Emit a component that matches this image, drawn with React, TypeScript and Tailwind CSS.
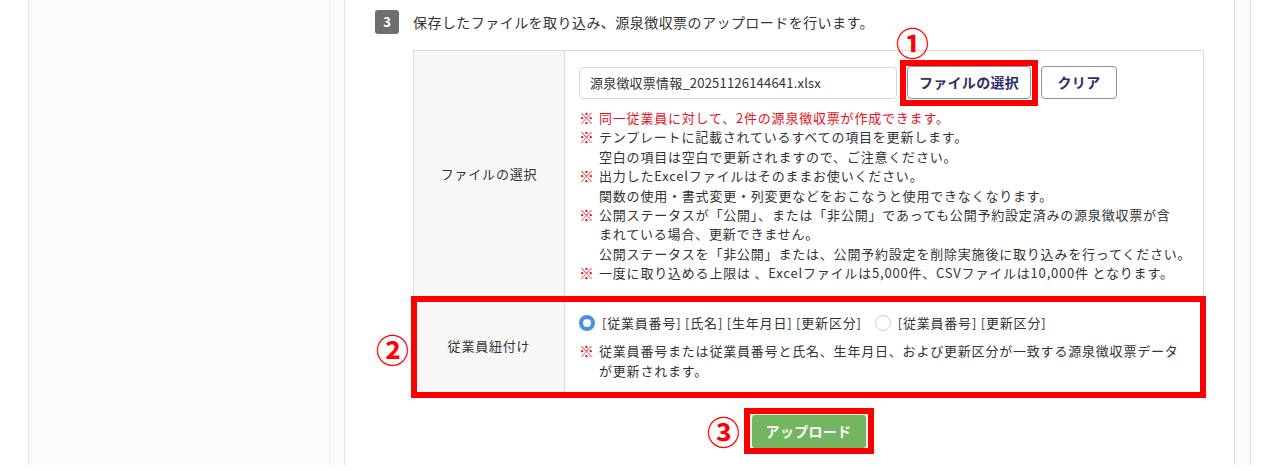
import React from 'react';

const Note = ({ red, children }: { red?: boolean; children: React.ReactNode }) => (
  <div className="flex">
    <span className="w-[20px] shrink-0 text-[#e8101a] text-[15px] font-bold">※</span>
    <div className={red ? 'text-[#e8101a]' : ''}>{children}</div>
  </div>
);

const Circled = ({ n, className }: { n: string; className: string }) => (
  <span
    className={`absolute w-[32px] h-[32px] flex items-center justify-center text-[33px] leading-none font-bold text-[#ff0000] ${className}`}
  >
    {n}
  </span>
);

export default function App() {
  return (
    <div className="w-[1280px] h-[471px] bg-white flex font-['Noto_Sans_CJK_JP','Noto_Sans',sans-serif] text-[#333]">
      <div className="w-[28px] shrink-0" />
      {/* left panel */}
      <div className="w-[317px] h-[465px] shrink-0 border-x border-[#e3e3e3] bg-[#fafafa] flex">
        <div className="flex-1" />
        <div className="w-[15px] border-l border-[#efefef]" />
      </div>

      {/* main */}
      <main className="w-[889px] shrink-0 pt-[10px] px-[30px]">
        <div className="flex items-center h-[24px]">
          <span className="w-[24px] h-[24px] rounded-[3px] bg-[#6e6e6e] text-white text-[13px] font-bold flex items-center justify-center">
            3
          </span>
          <span className="ml-[14px] text-[14px] tracking-[0.45px]">
            保存したファイルを取り込み、源泉徴収票のアップロードを行います。
          </span>
        </div>

        <div className="ml-[38px] mt-[16px] w-[791px] border border-[#dcdcdc] text-[13px] tracking-[0.8px]">
          {/* row 1 */}
          <div className="flex h-[246px] border-b border-[#dcdcdc]">
            <div className="w-[151px] shrink-0 bg-[#f7f7f7] border-r border-[#dcdcdc] flex items-center justify-center">
              ファイルの選択
            </div>
            <div className="flex-1 pl-[14px] pt-[15px]">
              <div className="flex items-center">
                <div className="w-[318px] h-[32px] border border-[#d8d8d8] rounded-[4px] flex items-center px-[10px] tracking-[0.2px]">
                  源泉徴収票情報_20251126144641.xlsx
                </div>
                <span className="relative ml-[10px]">
                  <button className="w-[124px] h-[33px] border border-[#8e8eb2] rounded-[4px] bg-white text-[#2e2e6a] text-[14px] font-bold tracking-[0.3px]">
                    ファイルの選択
                  </button>
                  <span className="absolute -left-[7px] -top-[6px] -right-[7px] -bottom-[7px] border-[6px] border-[#ff0000]" />
                  <Circled n="①" className="-left-[10px] -top-[40px]" />
                </span>
                <button className="ml-[10px] w-[76px] h-[33px] border border-[#8e8eb2] rounded-[4px] bg-white text-[#2e2e6a] text-[14px] font-bold tracking-[0.3px]">
                  クリア
                </button>
              </div>
              <div className="mt-[9px] leading-[19.4px]">
                <Note red>同一従業員に対して、2件の源泉徴収票が作成できます。</Note>
                <Note>
                  テンプレートに記載されているすべての項目を更新します。
                  <br />
                  空白の項目は空白で更新されますので、ご注意ください。
                </Note>
                <Note>
                  出力したExcelファイルはそのままお使いください。
                  <br />
                  関数の使用・書式変更・列変更などをおこなうと使用できなくなります。
                </Note>
                <Note>
                  公開ステータスが「公開」、または「非公開」であっても公開予約設定済みの源泉徴収票が含
                  <br />
                  まれている場合、更新できません。
                  <br />
                  公開ステータスを「非公開」または、公開予約設定を削除実施後に取り込みを行ってください。
                </Note>
                <Note>一度に取り込める上限は 、Excelファイルは5,000件、CSVファイルは10,000件 となります。</Note>
              </div>
            </div>
          </div>

          {/* row 2 */}
          <div className="relative flex h-[98px]">
            <div className="w-[151px] shrink-0 bg-[#f7f7f7] border-r border-[#dcdcdc] flex items-center justify-center">
              従業員紐付け
            </div>
            <div className="flex-1 pl-[14px] pt-[17px]">
              <div className="flex items-center h-[18px]">
                <span className="w-[16px] h-[16px] rounded-full border-[4px] border-[#4a8fe4] bg-white" />
                <span className="ml-[7px]">[従業員番号] [氏名] [生年月日] [更新区分]</span>
                <span className="ml-[13px] w-[16px] h-[16px] rounded-full border border-[#cfcfcf] bg-white" />
                <span className="ml-[7px]">[従業員番号] [更新区分]</span>
              </div>
              <div className="mt-[9px] leading-[20px]">
                <Note>
                  従業員番号または従業員番号と氏名、生年月日、および更新区分が一致する源泉徴収票データ
                  <br />
                  が更新されます。
                </Note>
              </div>
            </div>
            <span className="absolute -left-[3px] -top-[1px] -right-[3px] -bottom-[3px] border-[6px] border-[#ff0000]" />
            <Circled n="②" className="-left-[37px] top-[36px]" />
          </div>
        </div>

        <div className="ml-[38px] w-[791px] flex justify-center mt-[18px]">
          <span className="relative">
            <button className="w-[116px] h-[35px] rounded-[4px] bg-[#74b560] border border-[#e6f2e0] text-white text-[14px] font-bold tracking-[0.3px]">
              アップロード
            </button>
            <span className="absolute -left-[7px] -top-[6px] -right-[7px] -bottom-[5px] border-[6px] border-[#ff0000]" />
            <Circled n="③" className="-left-[43px] top-[1px]" />
          </span>
        </div>
      </main>

      {/* right panel */}
      <div className="w-[17px] h-[465px] shrink-0 border-x border-[#e3e3e3] bg-[#fafafa]" />
      <div className="w-[29px] shrink-0" />
    </div>
  );
}
